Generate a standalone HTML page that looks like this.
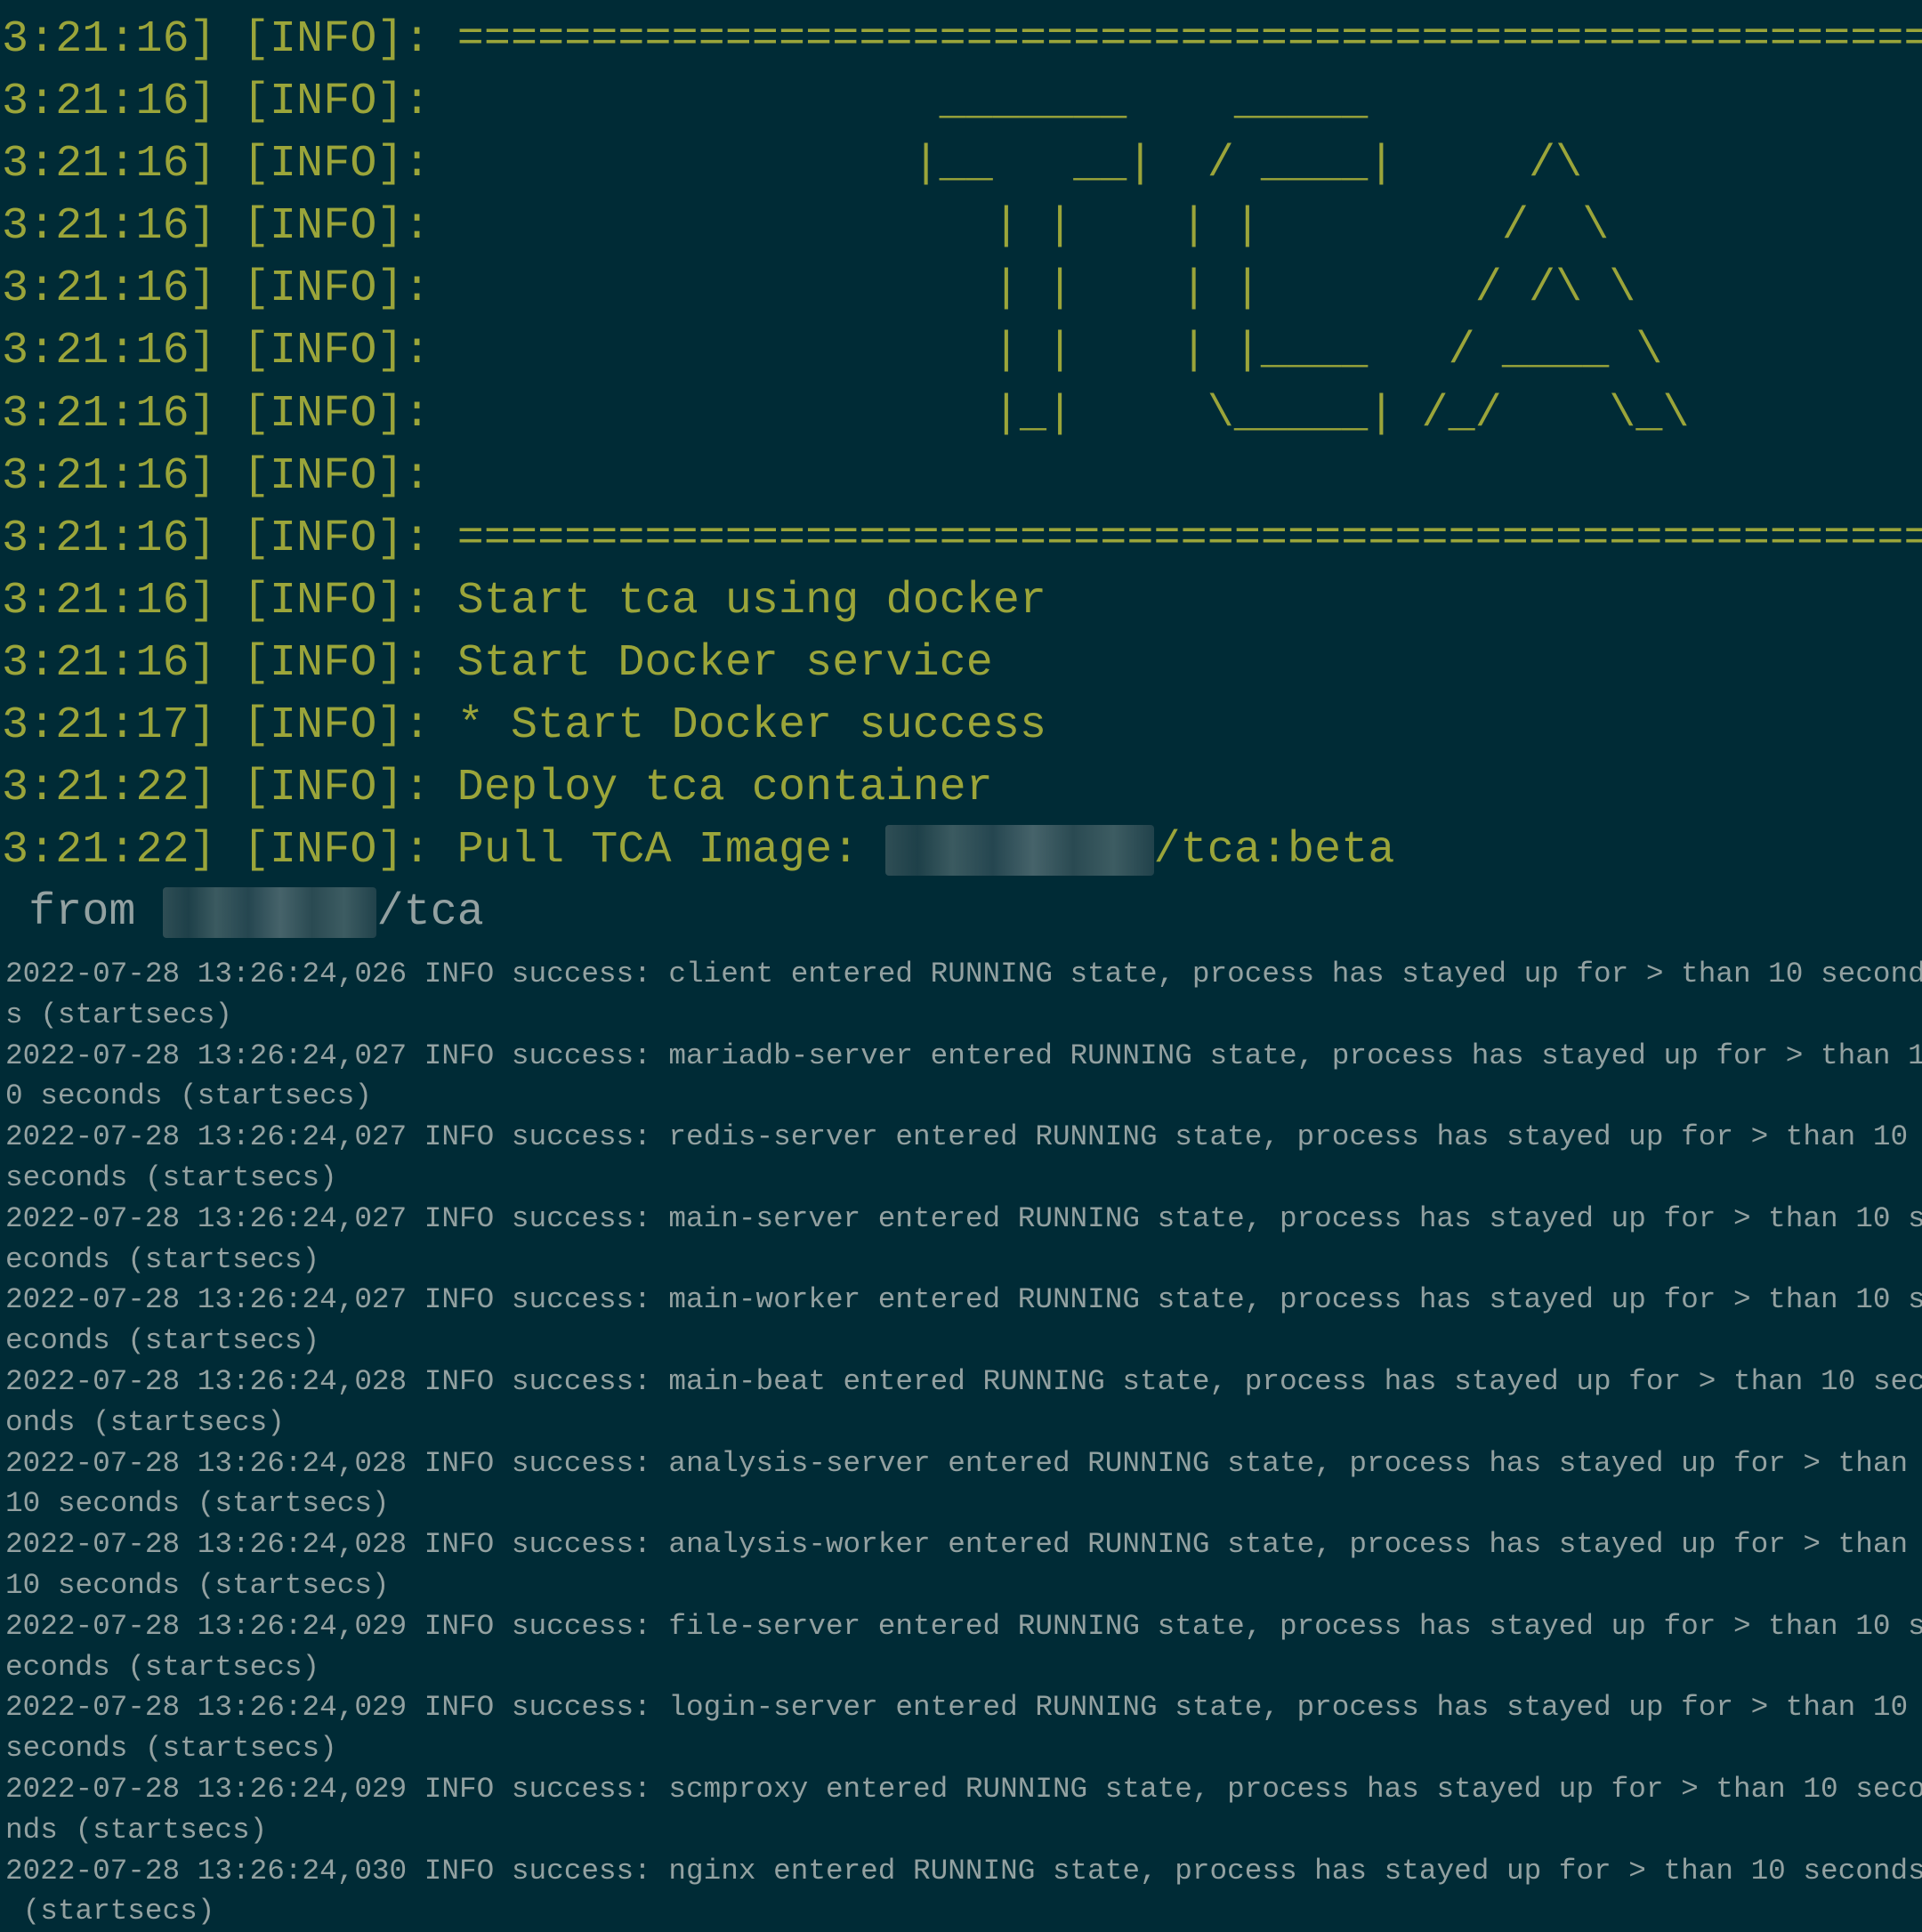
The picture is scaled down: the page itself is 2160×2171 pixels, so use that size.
<!DOCTYPE html>
<html><head><meta charset="utf-8"><style>
html,body{margin:0;padding:0;background:#002b36;width:2160px;height:2150px;overflow:hidden}
pre{margin:0;position:absolute;left:2px;white-space:pre;font-family:"Liberation Mono","DejaVu Sans Mono",monospace}
#top{top:10px;font-size:50px;line-height:70.1px;color:#9ba53a;letter-spacing:0.1px}
#top .g{color:#93a1a1}
#bot{top:1072px;font-size:32.7px;line-height:45.8px;color:#93a1a1;left:6px}
.blur{background:linear-gradient(90deg,#2f4e55 0%,#1e4049 12%,#3b5a60 25%,#254650 40%,#46636a 55%,#2a4a52 70%,#3d5c62 85%,#21424b 100%);border-radius:4px}
</style></head><body>
<pre id="top">3:21:16] [INFO]: ==========================================================
3:21:16] [INFO]:                   _______    _____
3:21:16] [INFO]:                  |__   __|  / ____|     /\
3:21:16] [INFO]:                     | |    | |         /  \
3:21:16] [INFO]:                     | |    | |        / /\ \
3:21:16] [INFO]:                     | |    | |____   / ____ \
3:21:16] [INFO]:                     |_|     \_____| /_/    \_\
3:21:16] [INFO]:
3:21:16] [INFO]: ==========================================================
3:21:16] [INFO]: Start tca using docker
3:21:16] [INFO]: Start Docker service
3:21:17] [INFO]: * Start Docker success
3:21:22] [INFO]: Deploy tca container
3:21:22] [INFO]: Pull TCA Image: <span class="blur">          </span>/tca:beta
<span class="g"> from <span class="blur">        </span>/tca</span></pre>
<pre id="bot">2022-07-28 13:26:24,026 INFO success: client entered RUNNING state, process has stayed up for &gt; than 10 second
s (startsecs)
2022-07-28 13:26:24,027 INFO success: mariadb-server entered RUNNING state, process has stayed up for &gt; than 1
0 seconds (startsecs)
2022-07-28 13:26:24,027 INFO success: redis-server entered RUNNING state, process has stayed up for &gt; than 10
seconds (startsecs)
2022-07-28 13:26:24,027 INFO success: main-server entered RUNNING state, process has stayed up for &gt; than 10 s
econds (startsecs)
2022-07-28 13:26:24,027 INFO success: main-worker entered RUNNING state, process has stayed up for &gt; than 10 s
econds (startsecs)
2022-07-28 13:26:24,028 INFO success: main-beat entered RUNNING state, process has stayed up for &gt; than 10 sec
onds (startsecs)
2022-07-28 13:26:24,028 INFO success: analysis-server entered RUNNING state, process has stayed up for &gt; than
10 seconds (startsecs)
2022-07-28 13:26:24,028 INFO success: analysis-worker entered RUNNING state, process has stayed up for &gt; than
10 seconds (startsecs)
2022-07-28 13:26:24,029 INFO success: file-server entered RUNNING state, process has stayed up for &gt; than 10 s
econds (startsecs)
2022-07-28 13:26:24,029 INFO success: login-server entered RUNNING state, process has stayed up for &gt; than 10
seconds (startsecs)
2022-07-28 13:26:24,029 INFO success: scmproxy entered RUNNING state, process has stayed up for &gt; than 10 seco
nds (startsecs)
2022-07-28 13:26:24,030 INFO success: nginx entered RUNNING state, process has stayed up for &gt; than 10 seconds
 (startsecs)</pre>
</body></html>
